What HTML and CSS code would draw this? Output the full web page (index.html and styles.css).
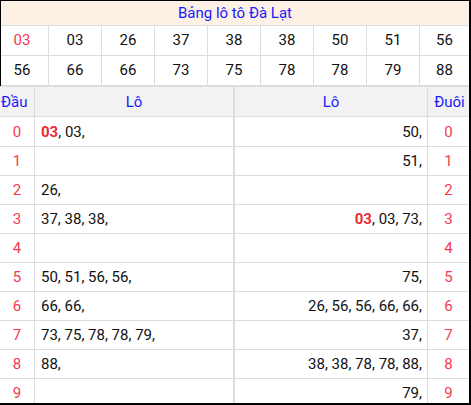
FILE: index.html
```html
<!DOCTYPE html>
<html lang="vi">
<head>
<meta charset="utf-8">
<link rel="stylesheet" href="styles.css">
</head>
<body>
<div class="board">
  <div class="top">
    <div class="title">Bảng lô tô Đà Lạt</div>
    <div class="nums">
      <div class="n first red">03</div><div class="n">03</div><div class="n">26</div><div class="n">37</div><div class="n">38</div><div class="n">38</div><div class="n">50</div><div class="n">51</div><div class="n last">56</div>
      <div class="n first">56</div><div class="n">66</div><div class="n">66</div><div class="n">73</div><div class="n">75</div><div class="n">78</div><div class="n">78</div><div class="n">79</div><div class="n last">88</div>
    </div>
  </div>
  <div class="lo">
    <div class="h dau">Đầu</div><div class="h left">Lô</div><div class="h right">Lô</div><div class="h duoi">Đuôi</div>

    <div class="c dau red">0</div><div class="c left"><b class="red">03</b>, 03,</div><div class="c right">50,</div><div class="c duoi red">0</div>
    <div class="c dau red">1</div><div class="c left"></div><div class="c right">51,</div><div class="c duoi red">1</div>
    <div class="c dau red">2</div><div class="c left">26,</div><div class="c right"></div><div class="c duoi red">2</div>
    <div class="c dau red">3</div><div class="c left">37, 38, 38,</div><div class="c right"><b class="red">03</b>, 03, 73,</div><div class="c duoi red">3</div>
    <div class="c dau red">4</div><div class="c left"></div><div class="c right"></div><div class="c duoi red">4</div>
    <div class="c dau red">5</div><div class="c left">50, 51, 56, 56,</div><div class="c right">75,</div><div class="c duoi red">5</div>
    <div class="c dau red">6</div><div class="c left">66, 66,</div><div class="c right">26, 56, 56, 66, 66,</div><div class="c duoi red">6</div>
    <div class="c dau red">7</div><div class="c left">73, 75, 78, 78, 79,</div><div class="c right">37,</div><div class="c duoi red">7</div>
    <div class="c dau red">8</div><div class="c left">88,</div><div class="c right">38, 38, 78, 78, 88,</div><div class="c duoi red">8</div>
    <div class="c dau red">9</div><div class="c left"></div><div class="c right">79,</div><div class="c duoi red">9</div>
  </div>
</div>
</body>
</html>
```

FILE: styles.css
```css
* { box-sizing: border-box; }
html, body { margin: 0; padding: 0; background: #fff; }
body {
  font-family: Roboto, "Liberation Sans", sans-serif;
  font-size: 15px;
  color: #111;
}
.board {
  width: 471px;
  height: 405px;
  overflow: hidden;
  border-top: 1px solid #000;
  border-right: 2px solid #000;
  border-bottom: 2px solid #000;
  position: relative;
}
.top { border-left: 1px solid #000; }
.title {
  height: 25px;
  line-height: 24px;
  background: #fdf1e6;
  color: #1a1aff;
  text-align: center;
  border-bottom: 1px solid #ddd;
  font-size: 15px;
}
.nums {
  display: grid;
  grid-template-columns: 48px repeat(7, 53px) 49px;
  grid-auto-rows: 30px;
}
.n {
  display: flex;
  align-items: center;
  justify-content: center;
  border-right: 1px solid #ddd;
  border-bottom: 1px solid #ddd;
  padding-bottom: 1px;
}
.n.first { padding-right: 5px; }
.n.last { border-right: 0; }
.red { color: #f43a4e; }
b.red { font-weight: 700; color: #ea2b36; }
.lo {
  display: grid;
  grid-template-columns: 35px 200px 193px 41px;
  grid-template-rows: 30px 30px repeat(9, 29px);
  border-top: 1px solid #ddd;
}
.h, .c {
  display: flex;
  align-items: center;
  border-bottom: 1px solid #ddd;
  white-space: nowrap;
}
.h { background: #f2f2f2; color: #1a1aff; justify-content: center; }
.dau { border-right: 1px solid #ddd; justify-content: center; }
.h.dau { justify-content: flex-start; padding-left: 1px; }
.left { border-right: 2px solid #ddd; padding-left: 6px; }
.right { border-right: 1px solid #ddd; justify-content: flex-end; padding-right: 5px; }
.h.left, .h.right { justify-content: center; padding: 0; }
.duoi { justify-content: center; }
.h.duoi { padding-left: 2px; }
```
